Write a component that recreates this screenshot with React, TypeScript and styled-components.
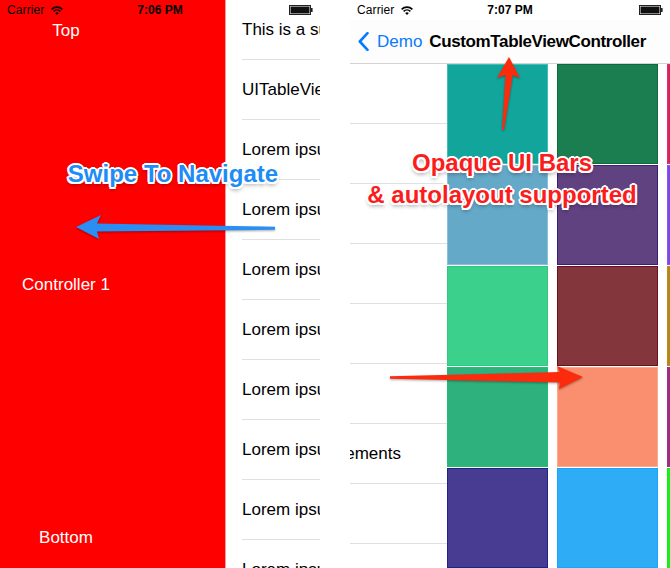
import React from "react";
import styled, { createGlobalStyle } from "styled-components";

const Global = createGlobalStyle`
  html, body { margin: 0; padding: 0; background: #fff; }
  body {
    width: 670px; height: 568px; overflow: hidden;
    font-family: "Liberation Sans", Helvetica, Arial, sans-serif;
    -webkit-font-smoothing: antialiased;
  }
  * { box-sizing: border-box; }
`;

const Page = styled.div`
  position: relative;
  width: 670px;
  height: 568px;
  display: flex;
  overflow: hidden;
  background: #fff;
`;

const Phone = styled.div`
  position: relative;
  width: 320px;
  height: 568px;
  flex: none;
  display: flex;
  flex-direction: column;
  overflow: hidden;
  background: #fff;
`;

const Gutter = styled.div`
  width: 30px;
  flex: none;
  background: #fff;
`;

const StatusBar = styled.div<{ $overlay?: boolean }>`
  ${(p) => (p.$overlay ? "position: absolute; top: 0; left: 0; right: 0; z-index: 2;" : "")}
  height: 20px;
  flex: none;
  display: grid;
  grid-template-columns: 1fr auto 1fr;
  align-items: center;
  padding: 0 7px 0 7px;
  font-size: 12px;
  color: #000;
`;

const StatusLeft = styled.div`
  display: flex;
  align-items: center;
  gap: 7px;
  letter-spacing: 0.1px;
`;

const Clock = styled.div`
  font-weight: 700;
  font-size: 12px;
`;

const StatusRight = styled.div`
  justify-self: end;
  display: flex;
  align-items: center;
`;

const Wifi = () => (
  <svg width="12" height="10" viewBox="0 0 12 10">
    <path d="M6 10 L4.1 8.1 A2.7 2.7 0 0 1 7.9 8.1 Z" fill="#000" />
    <path d="M2.6 6.4 A4.9 4.9 0 0 1 9.4 6.4" stroke="#000" strokeWidth="1.6" fill="none" />
    <path d="M0.6 4.3 A7.8 7.8 0 0 1 11.4 4.3" stroke="#000" strokeWidth="1.6" fill="none" />
  </svg>
);

const Battery = () => (
  <svg width="24" height="10" viewBox="0 0 24 10">
    <rect x="0.5" y="0.5" width="21" height="9" fill="#fff" stroke="#222" />
    <rect x="1.5" y="1.5" width="19" height="7" fill="#111" />
    <rect x="22" y="3" width="1.6" height="4" fill="#222" />
  </svg>
);

const SplitView = styled.div`
  display: flex;
  height: 568px;
`;

const RedPanel = styled.div`
  width: 226px;
  flex: none;
  background: #ff0000;
  border-right: 1px solid #ff9a9a;
  display: flex;
`;

const RedColumn = styled.div`
  width: 132px;
  display: flex;
  flex-direction: column;
  justify-content: space-between;
  align-items: center;
  padding: 21px 0 20px;
`;

const RedLabel = styled.div`
  color: #fff;
  font-size: 17px;
  line-height: 20px;
`;

const TableView = styled.div<{ $width?: number }>`
  ${(p) => (p.$width ? `width: ${p.$width}px; flex: none;` : "flex: 1;")}
  overflow: hidden;
  background: #fff;
`;

const TableRow = styled.div<{ $inset: number }>`
  height: 60px;
  margin-left: ${(p) => p.$inset}px;
  border-bottom: 1px solid #e0e0e0;
  display: flex;
  align-items: center;
  font-size: 17px;
  color: #000;
  white-space: nowrap;
  overflow: hidden;
`;

const CutText = styled.span<{ $shift: number }>`
  margin-left: ${(p) => p.$shift}px;
`;

const NavBar = styled.div`
  height: 44px;
  flex: none;
  display: flex;
  align-items: center;
  padding-left: 8px;
  background: #fdfdfd;
  border-bottom: 1px solid #d4d4d4;
`;

const BackButton = styled.div`
  display: flex;
  align-items: center;
  gap: 8px;
  color: #0a7aff;
  font-size: 17px;
`;

const NavTitle = styled.div`
  margin-left: 7px;
  font-size: 17px;
  font-weight: 700;
  letter-spacing: -0.38px;
  color: #000;
  white-space: nowrap;
`;

const Chevron = () => (
  <svg width="11" height="19" viewBox="0 0 11 19">
    <path d="M9.5 1.2 L1.8 9.5 L9.5 17.8" stroke="#0a7aff" strokeWidth="2.6" fill="none" strokeLinecap="round" strokeLinejoin="round" />
  </svg>
);

const Body = styled.div`
  flex: 1;
  display: flex;
  overflow: hidden;
`;

const Grid = styled.div`
  flex: none;
  display: grid;
  grid-template-columns: repeat(3, 101px);
  grid-auto-rows: 100px;
  column-gap: 9px;
  row-gap: 1px;
`;

const Cell = styled.div<{ $fill: string; $edge: string }>`
  background: ${(p) => p.$fill};
  border: 1px solid ${(p) => p.$edge};
`;

const Annotations = styled.svg`
  position: absolute;
  left: 0;
  top: 0;
  width: 670px;
  height: 568px;
  pointer-events: none;
  z-index: 5;
  filter: drop-shadow(0 1px 1px rgba(0, 0, 0, 0.35));
`;

const Callout = styled.div<{ $color: string; $left: number; $top: number; $width: number }>`
  position: absolute;
  left: ${(p) => p.$left}px;
  top: ${(p) => p.$top}px;
  width: ${(p) => p.$width}px;
  z-index: 6;
  text-align: center;
  white-space: nowrap;
  font-family: "Liberation Sans", Helvetica, Arial, sans-serif;
  font-weight: 700;
  font-size: 24px;
  line-height: 32px;
  color: ${(p) => p.$color};
  text-shadow:
    -2px 0 0 #fff, 2px 0 0 #fff, 0 -2px 0 #fff, 0 2px 0 #fff,
    -1.5px -1.5px 0 #fff, 1.5px -1.5px 0 #fff, -1.5px 1.5px 0 #fff, 1.5px 1.5px 0 #fff,
    0 3px 4px rgba(0, 0, 0, 0.45);
`;

const leftRows = [
  "This is a subtitle",
  "UITableViewController",
  "Lorem ipsum dolor",
  "Lorem ipsum dolor",
  "Lorem ipsum dolor",
  "Lorem ipsum dolor",
  "Lorem ipsum dolor",
  "Lorem ipsum dolor",
  "Lorem ipsum dolor",
  "Lorem ipsum dolor",
];

const rightRows = ["", "", "", "", "", "", "elements", "", ""];

const cells: [string, string][] = [
  ["#12a59b", "#3fc0b6"], ["#1a7e50", "#0e6a38"], ["#d3245c", "#e0306a"],
  ["#65a9c8", "#86c0da"], ["#604281", "#3c1d78"], ["#7c45e6", "#8a55f0"],
  ["#3bd08c", "#2fc87e"], ["#83363c", "#68101c"], ["#b5841c", "#c08a14"],
  ["#2fb17d", "#1fc072"], ["#f98f6f", "#ffa88a"], ["#9c2c7e", "#a8308a"],
  ["#473c91", "#22208a"], ["#2eacf6", "#18a4ff"], ["#1cee1c", "#10f010"],
];

export default function App() {
  return (
    <>
      <Global />
      <Page>
        <Phone>
          <StatusBar $overlay>
            <StatusLeft>
              <span>Carrier</span>
              <Wifi />
            </StatusLeft>
            <Clock>7:06 PM</Clock>
            <StatusRight>
              <Battery />
            </StatusRight>
          </StatusBar>
          <SplitView>
            <RedPanel>
              <RedColumn>
                <RedLabel>Top</RedLabel>
                <RedLabel>Controller 1</RedLabel>
                <RedLabel>Bottom</RedLabel>
              </RedColumn>
            </RedPanel>
            <TableView>
              {leftRows.map((t, i) => (
                <TableRow key={i} $inset={16}>
                  {t}
                </TableRow>
              ))}
            </TableView>
          </SplitView>
        </Phone>
        <Gutter />
        <Phone>
          <StatusBar>
            <StatusLeft>
              <span>Carrier</span>
              <Wifi />
            </StatusLeft>
            <Clock>7:07 PM</Clock>
            <StatusRight>
              <Battery />
            </StatusRight>
          </StatusBar>
          <NavBar>
            <BackButton>
              <Chevron />
              <span>Demo</span>
            </BackButton>
            <NavTitle>CustomTableViewController</NavTitle>
          </NavBar>
          <Body>
            <TableView $width={97}>
              {rightRows.map((t, i) => (
                <TableRow key={i} $inset={0}>
                  {t && <CutText $shift={-18}>{t}</CutText>}
                </TableRow>
              ))}
            </TableView>
            <Grid>
              {cells.map(([f, e], i) => (
                <Cell key={i} $fill={f} $edge={e} />
              ))}
            </Grid>
          </Body>
        </Phone>

        <Annotations viewBox="0 0 670 568">
          <polygon
            points="76,227 101,215 97,223.5 275,226.8 275,229.8 97,231.5 99,239"
            fill="#2a8ef2"
          />
          <polygon
            points="509,57 520,78 512.8,75 504,130 502,130 505.5,75 497,78"
            fill="#fd2b0e"
          />
          <polygon
            points="583,377 557,366 560,372 390,376.3 390,378.8 560,382.5 559,389"
            fill="#fd2b0e"
          />
        </Annotations>

        <Callout $color="#1d8cf6" $left={40} $top={158} $width={266}>
          Swipe To Navigate
        </Callout>
        <Callout $color="#fb1c1c" $left={337} $top={147} $width={330}>
          Opaque UI Bars
          <br />& autolayout supported
        </Callout>
      </Page>
    </>
  );
}
